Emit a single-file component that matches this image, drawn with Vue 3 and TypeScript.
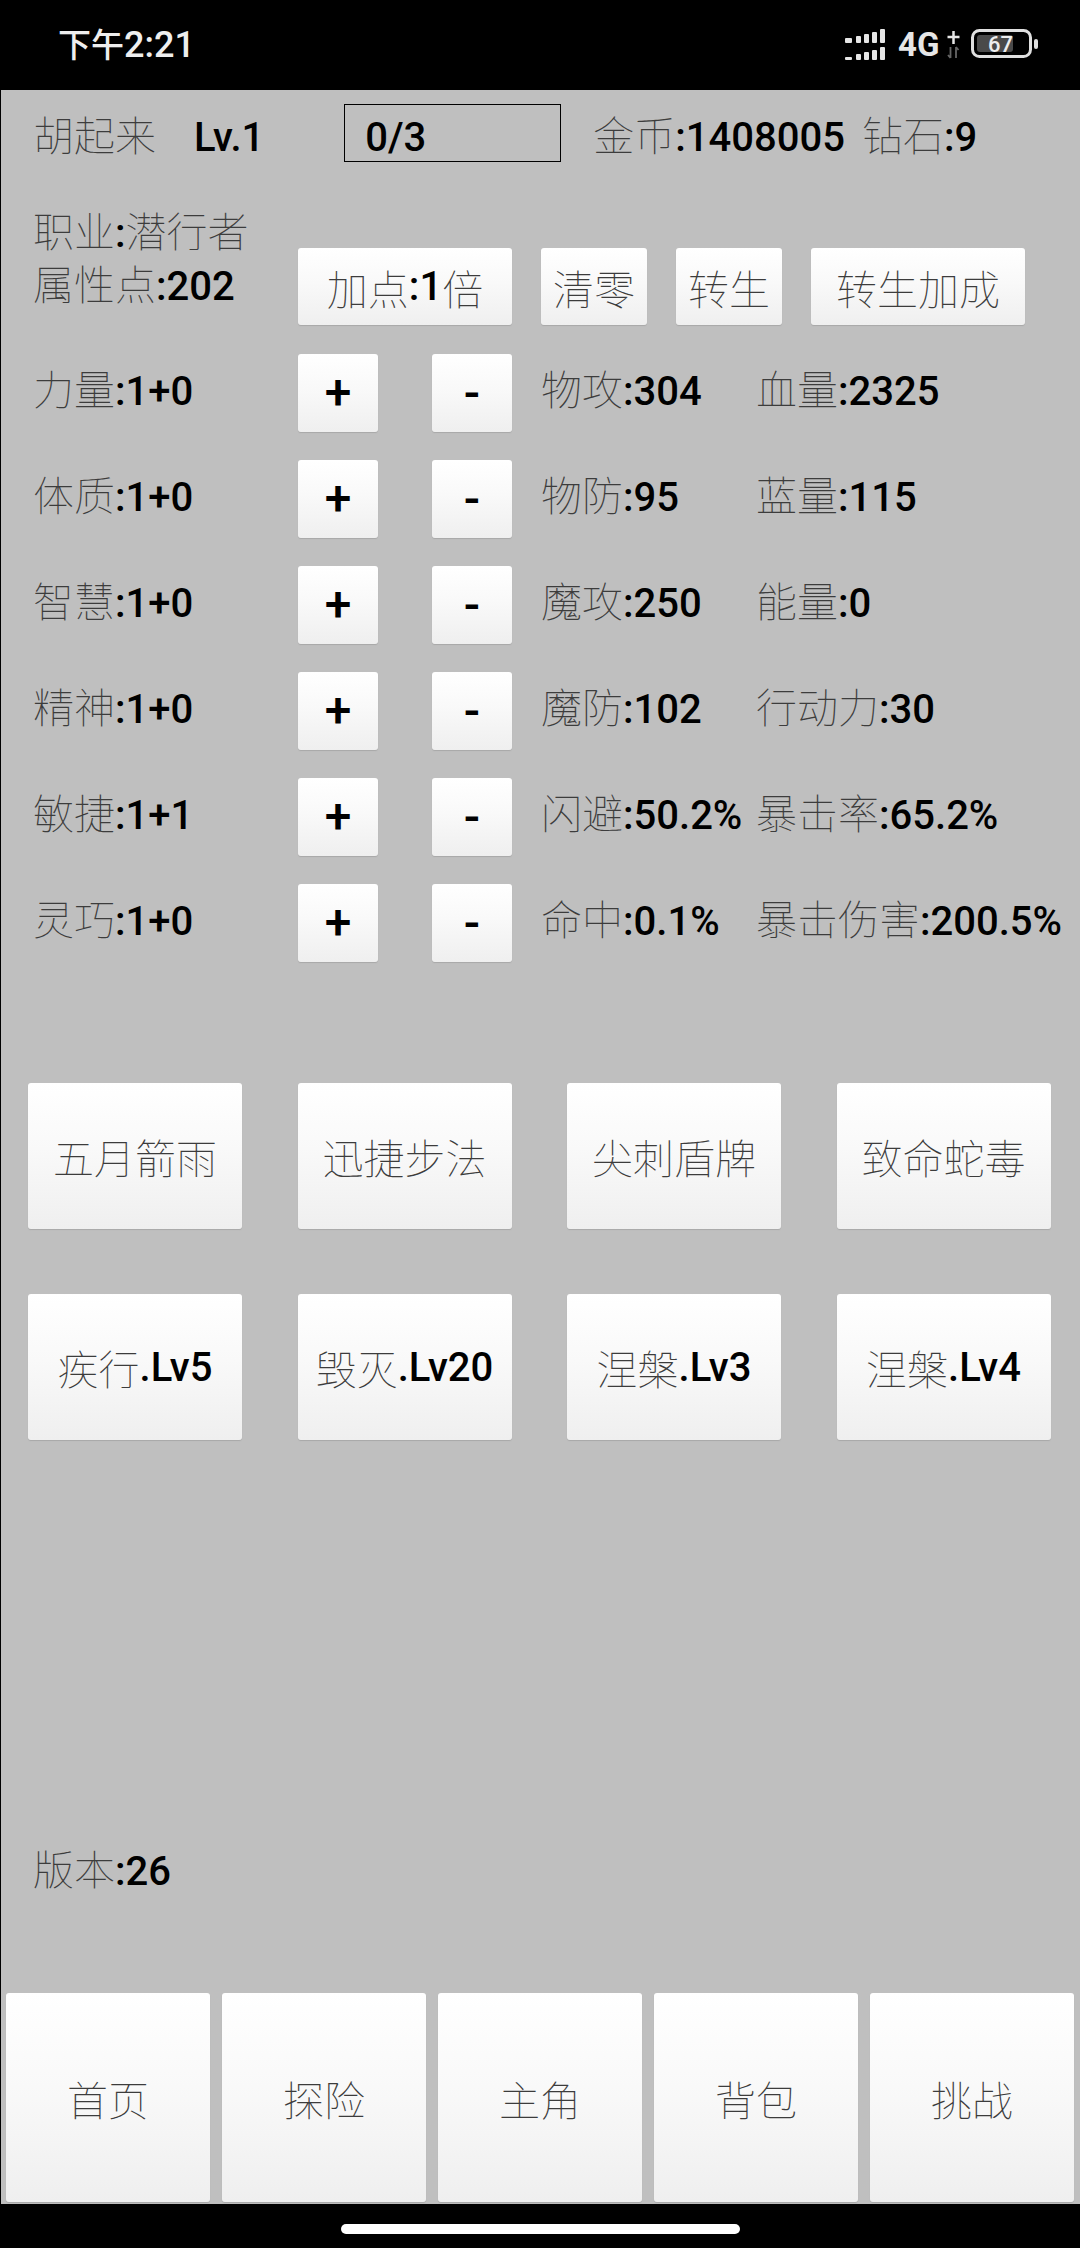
<script setup lang="ts">
const attrs = [
  { a: '力量', av: ':1+0', s1: '物攻', v1: ':304', s2: '血量', v2: ':2325' },
  { a: '体质', av: ':1+0', s1: '物防', v1: ':95', s2: '蓝量', v2: ':115' },
  { a: '智慧', av: ':1+0', s1: '魔攻', v1: ':250', s2: '能量', v2: ':0' },
  { a: '精神', av: ':1+0', s1: '魔防', v1: ':102', s2: '行动力', v2: ':30' },
  { a: '敏捷', av: ':1+1', s1: '闪避', v1: ':50.2%', s2: '暴击率', v2: ':65.2%' },
  { a: '灵巧', av: ':1+0', s1: '命中', v1: ':0.1%', s2: '暴击伤害', v2: ':200.5%' },
]
const skills = ['五月箭雨', '迅捷步法', '尖刺盾牌', '致命蛇毒']
const passives = [
  { n: '疾行', l: '.Lv5' },
  { n: '毁灭', l: '.Lv20' },
  { n: '涅槃', l: '.Lv3' },
  { n: '涅槃', l: '.Lv4' },
]
const tabs = ['首页', '探险', '主角', '背包', '挑战']
const upper = [
  [845, 38, 7, 5],
  [856, 36, 5, 7],
  [864, 34, 5, 9],
  [872, 32, 5, 11],
  [880, 29, 5, 14],
]
const lower = [
  [845, 57, 7, 3],
  [856, 54, 5, 6],
  [864, 52, 5, 8],
  [872, 50, 5, 10],
  [880, 47, 5, 13],
]
</script>

<template>
  <div class="phone">
    <header class="status">
      <span class="time"><span class="tc">下午</span>2:21</span>
      <svg class="indicators" width="200" height="40" viewBox="840 25 200 40">
        <rect v-for="b in upper" :key="b[0]" :x="b[0]" :y="b[1]" :width="b[2]" :height="b[3]" rx="1" fill="#e6e6e6" />
        <rect v-for="b in lower" :key="b[0]" :x="b[0]" :y="b[1]" :width="b[2]" :height="b[3]" rx="1" fill="#e6e6e6" />
        <text x="898" y="56" class="net">4G</text>
        <path d="M953.5 31v13M947.5 37h12" stroke="#e6e6e6" stroke-width="2.5" fill="none" />
        <path d="M950.5 47v11M948 55l2.5 3M956 47v11M956 47l2.5 3" stroke="#666" stroke-width="1.8" fill="none" />
        <rect x="972.5" y="30.5" width="58" height="26" rx="7" fill="none" stroke="#e0e0e0" stroke-width="3" />
        <rect x="977" y="35" width="36" height="17" rx="3" fill="#4a4a4a" />
        <text x="988" y="52" class="pct">67</text>
        <rect x="1034" y="39" width="4" height="10" rx="2" fill="#e0e0e0" />
      </svg>
    </header>

    <main class="page">
      <div class="top">
        <span class="name"><span class="c">胡起来</span></span>
        <span class="level">Lv.1</span>
        <div class="exp">0/3</div>
        <span class="gold"><span class="c">金币</span>:1408005</span>
        <span class="gem"><span class="c">钻石</span>:9</span>
      </div>

      <div class="profile">
        <div class="who">
          <div class="line"><span class="c">职业</span>:<span class="c">潜行者</span></div>
          <div class="line"><span class="c">属性点</span>:202</div>
        </div>
        <div class="actions">
          <button class="btn wide"><span class="c">加点</span>:1<span class="c">倍</span></button>
          <button class="btn narrow"><span class="c">清零</span></button>
          <button class="btn narrow"><span class="c">转生</span></button>
          <button class="btn wide"><span class="c">转生加成</span></button>
        </div>
      </div>

      <div class="attrs">
        <div v-for="r in attrs" :key="r.a" class="attr">
          <span class="label"><span class="c">{{ r.a }}</span>{{ r.av }}</span>
          <button class="btn step"><span class="sign">+</span></button>
          <button class="btn step minus"><span class="sign">-</span></button>
          <span class="stat one"><span class="c">{{ r.s1 }}</span>{{ r.v1 }}</span>
          <span class="stat"><span class="c">{{ r.s2 }}</span>{{ r.v2 }}</span>
        </div>
      </div>

      <div class="skills first">
        <button v-for="s in skills" :key="s" class="btn skill"><span class="c">{{ s }}</span></button>
      </div>
      <div class="skills">
        <button v-for="p in passives" :key="p.l" class="btn skill"><span class="c">{{ p.n }}</span>{{ p.l }}</button>
      </div>

      <div class="version"><span class="c">版本</span>:26</div>

      <nav class="tabs">
        <button v-for="t in tabs" :key="t" class="btn tab"><span class="c">{{ t }}</span></button>
      </nav>
    </main>

    <footer class="gesture"><span class="pill"></span></footer>
  </div>
</template>

<style scoped>
.phone {
  width: 1080px;
  height: 2248px;
  display: flex;
  flex-direction: column;
  background: #000;
  font-family: Roboto, "Noto Sans CJK SC", sans-serif;
  font-size: 40px;
  font-weight: 500;
  color: #000;
  overflow: hidden;
}
.c {
  font-family: "Noto Sans CJK SC", sans-serif;
  font-size: 41px;
  font-weight: 100;
  line-height: 0;
  color: #3c3c3c;
}
.status {
  height: 90px;
  flex: none;
  display: flex;
  align-items: center;
  justify-content: space-between;
  padding-left: 58px;
  color: #eee;
  font-size: 36px;
}
.time {
  font-weight: 500;
  margin-top: -4px;
}
.tc {
  font-family: "Noto Sans CJK SC", sans-serif;
  font-size: 33px;
}
.indicators {
  margin-right: 40px;
}
.net {
  font-family: Roboto, sans-serif;
  font-size: 33px;
  font-weight: 700;
  fill: #e6e6e6;
}
.pct {
  font-family: Roboto, sans-serif;
  font-size: 22px;
  font-weight: 500;
  fill: #eee;
}
.page {
  height: 2114px;
  flex: none;
  margin-left: 1px;
  background: #bfbfbf;
  display: flex;
  flex-direction: column;
  position: relative;
}
.top {
  height: 58px;
  margin-top: 14px;
  display: flex;
  align-items: flex-start;
  padding-left: 32px;
  line-height: 68px;
}
.level {
  margin-left: 38px;
}
.exp {
  box-sizing: border-box;
  width: 217px;
  height: 58px;
  margin-left: 80px;
  border: 1px solid #000;
  padding-left: 20px;
  line-height: 66px;
}
.gold {
  margin-left: 32px;
}
.gem {
  margin-left: 17px;
}
.profile {
  display: flex;
  align-items: flex-end;
  margin-top: 45px;
  padding-left: 32px;
}
.who {
  width: 265px;
}
.line {
  height: 53px;
  line-height: 53px;
  white-space: nowrap;
}
.actions {
  display: flex;
  gap: 29px;
  margin-bottom: -12px;
}
.btn {
  border: none;
  padding: 0;
  margin: 0;
  font: inherit;
  color: #000;
  border-radius: 3px;
  background: linear-gradient(#ffffff, #f9f9f9 45%, #efefef);
  box-shadow: 0 1px 1px #a8a8a8;
  display: flex;
  align-items: center;
  justify-content: center;
  white-space: nowrap;
}
.wide {
  width: 214px;
  height: 77px;
}
.narrow {
  width: 106px;
  height: 77px;
}
.attrs {
  margin-top: 41px;
  display: flex;
  flex-direction: column;
  gap: 28px;
  padding-left: 32px;
}
.attr {
  height: 78px;
  display: flex;
  align-items: center;
}
.label {
  width: 265px;
  margin-bottom: 4px;
}
.step {
  width: 80px;
  height: 78px;
}
.sign {
  font-size: 48px;
  line-height: 1;
}
.minus {
  margin-left: 54px;
}
.stat {
  white-space: nowrap;
  margin-bottom: 4px;
}
.one {
  width: 215px;
  margin-left: 29px;
}
.skills {
  display: grid;
  grid-template-columns: repeat(4, 214px);
  column-gap: 55.5px;
  margin-top: 65px;
  padding-left: 27px;
}
.skills.first {
  margin-top: 121px;
}
.skill {
  height: 146px;
}
.version {
  margin-top: 405px;
  padding-left: 32px;
  line-height: 54px;
}
.tabs {
  position: absolute;
  left: 5px;
  bottom: 2px;
  display: flex;
  gap: 12px;
}
.tab {
  width: 204px;
  height: 209px;
}
.gesture {
  flex: 1;
  display: flex;
  justify-content: center;
  padding-top: 20px;
  box-sizing: border-box;
}
.pill {
  width: 399px;
  height: 10px;
  border-radius: 5px;
  background: #fff;
}
</style>
